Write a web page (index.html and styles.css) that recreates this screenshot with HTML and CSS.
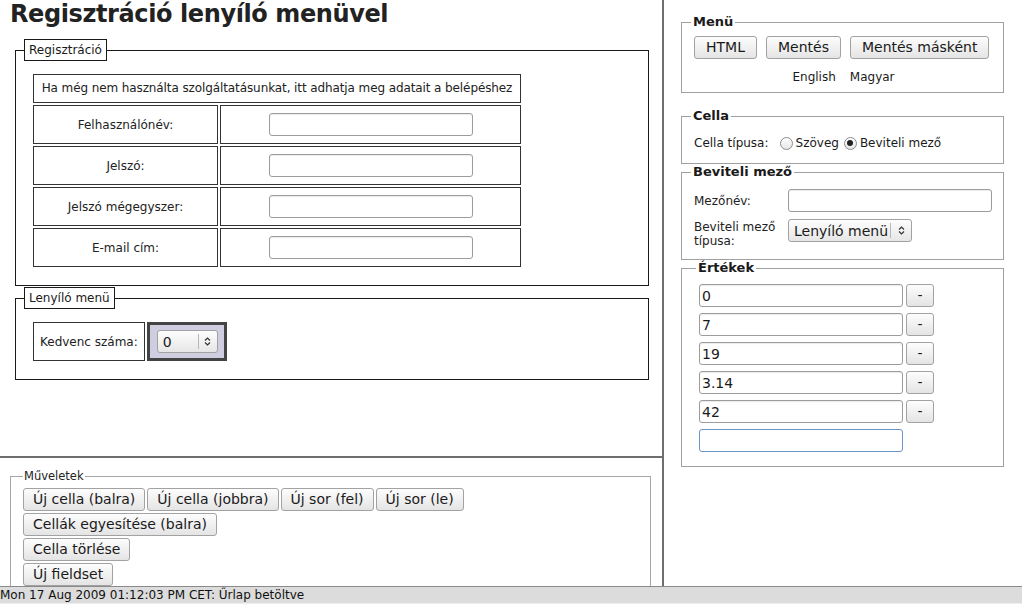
FILE: index.html
```html
<!DOCTYPE html>
<html lang="hu">
<head>
<meta charset="utf-8">
<title>Regisztráció lenyíló menüvel</title>
<link rel="stylesheet" href="styles.css">
</head>
<body>
<div class="app">
  <div class="left">
    <div class="top">
      <h1 class="title">Regisztráció lenyíló menüvel</h1>
      <fieldset class="lfs lfs-first">
        <legend class="llg">Regisztráció</legend>
        <table class="ftable ftable-reg">
          <tr><td class="intro" colspan="2">Ha még nem használta szolgáltatásunkat, itt adhatja meg adatait a belépéshez</td></tr>
          <tr><td class="lbl">Felhasználónév:</td><td class="fld"><input class="txt" type="text"></td></tr>
          <tr><td class="lbl">Jelszó:</td><td class="fld"><input class="txt" type="text"></td></tr>
          <tr><td class="lbl">Jelszó mégegyszer:</td><td class="fld"><input class="txt" type="text"></td></tr>
          <tr><td class="lbl">E-mail cím:</td><td class="fld"><input class="txt" type="text"></td></tr>
        </table>
      </fieldset>
      <fieldset class="lfs lfs-second">
        <legend class="llg">Lenyíló menü</legend>
        <table class="ftable">
          <tr>
            <td class="klbl">Kedvenc száma:</td>
            <td class="ksel">
              <div class="sel sel-num"><span class="sel-text">0</span><span class="sel-sep"></span><span class="sel-arrow"><svg width="7" height="11" viewBox="0 0 7 11"><path d="M1 4.5 L3.5 2 L6 4.5 M1 6.5 L3.5 9 L6 6.5" fill="none" stroke="#333" stroke-width="1.2"/></svg></span></div>
            </td>
          </tr>
        </table>
      </fieldset>
    </div>
    <div class="hdiv"></div>
    <div class="bottom">
      <fieldset class="ops">
        <legend class="opslg">Műveletek</legend>
        <div class="oprows">
          <div class="oprow"><button class="btn">Új cella (balra)</button><button class="btn">Új cella (jobbra)</button><button class="btn">Új sor (fel)</button><button class="btn">Új sor (le)</button></div>
          <div class="oprow"><button class="btn">Cellák egyesítése (balra)</button></div>
          <div class="oprow"><button class="btn">Cella törlése</button></div>
          <div class="oprow"><button class="btn">Új fieldset</button></div>
        </div>
      </fieldset>
    </div>
  </div>
  <div class="vdiv"></div>
  <div class="right">
    <fieldset class="rfs rfs-menu">
      <legend class="rlg">Menü</legend>
      <div class="menubtns"><button class="btn btn-menu">HTML</button><button class="btn btn-menu">Mentés</button><button class="btn btn-menu">Mentés másként</button></div>
      <div class="langs"><span class="lang">English</span><span class="lang">Magyar</span></div>
    </fieldset>
    <fieldset class="rfs rfs-cell">
      <legend class="rlg">Cella</legend>
      <div class="radiorow">
        <span class="rlabel">Cella típusa:</span>
        <span class="radio"></span><span class="ropt">Szöveg</span>
        <span class="radio checked"></span><span class="ropt">Beviteli mező</span>
      </div>
    </fieldset>
    <fieldset class="rfs rfs-input">
      <legend class="rlg">Beviteli mező</legend>
      <div class="fgrid">
        <span class="flabel flabel-mid">Mezőnév:</span>
        <input class="txt" type="text">
        <span class="flabel">Beviteli mező típusa:</span>
        <div class="sel sel-type"><span class="sel-text">Lenyíló menü</span><span class="sel-sep"></span><span class="sel-arrow"><svg width="7" height="11" viewBox="0 0 7 11"><path d="M1 4.5 L3.5 2 L6 4.5 M1 6.5 L3.5 9 L6 6.5" fill="none" stroke="#333" stroke-width="1.2"/></svg></span></div>
      </div>
    </fieldset>
    <fieldset class="rfs rfs-values">
      <legend class="rlg">Értékek</legend>
      <div class="vals">
        <div class="valrow"><input class="txt" type="text" value="0"><button class="btn btn-minus">-</button></div>
        <div class="valrow"><input class="txt" type="text" value="7"><button class="btn btn-minus">-</button></div>
        <div class="valrow"><input class="txt" type="text" value="19"><button class="btn btn-minus">-</button></div>
        <div class="valrow"><input class="txt" type="text" value="3.14"><button class="btn btn-minus">-</button></div>
        <div class="valrow"><input class="txt" type="text" value="42"><button class="btn btn-minus">-</button></div>
        <div class="valrow"><input class="txt txt-focus" type="text"></div>
      </div>
    </fieldset>
  </div>
  <div class="status">Mon 17 Aug 2009 01:12:03 PM CET: Űrlap betöltve</div>
</div>
</body>
</html>
```

FILE: styles.css
```css
* { box-sizing: border-box; }
html, body { margin: 0; padding: 0; }
body {
  font-family: "DejaVu Sans", sans-serif;
  font-size: 12px;
  color: #1a1a1a;
  background: #fff;
  width: 1022px;
  height: 604px;
  overflow: hidden;
}
.app {
  display: grid;
  grid-template-columns: 662px 2px 358px;
  grid-template-rows: 586px 18px;
  height: 604px;
}
.left { display: flex; flex-direction: column; overflow: hidden; }
.top { height: 456px; flex: none; overflow: hidden; }
.hdiv { height: 2px; background: #6e6e6e; flex: none; }
.bottom { flex: 1; overflow: hidden; }
.vdiv { background: #6e6e6e; }
.right { overflow: hidden; }
.status {
  grid-column: 1 / -1;
  background: #dcdcdc;
  border-top: 1px solid #8a8a8a;
  border-bottom: 1px solid #eeeeee;
  font-size: 12px;
  line-height: 16px;
  white-space: nowrap;
  color: #111;
}

.title {
  margin: 0;
  padding-left: 10px;
  font-size: 24px;
  line-height: 28px;
  font-weight: bold;
  letter-spacing: -0.4px;
  color: #222;
}

/* left fieldsets */
.lfs {
  width: 634px;
  margin: 0 0 0 15px;
  border: 1px solid #1a1a1a;
  padding: 11px 8px 16px;
  min-inline-size: 0;
}
.lfs-first { margin-top: 11px; }
.lfs-second { margin-top: 1px; }
.llg {
  border: 1px solid #1a1a1a;
  padding: 0 4px;
  font-size: 12px;
  line-height: 20px;
  background: #fff;
}
.ftable {
  border-collapse: separate;
  border-spacing: 2px;
  margin-left: 7px;
}
.ftable-reg { width: 492px; }
.ftable td {
  border: 1px solid #333;
  font-size: 12px;
  color: #222;
  vertical-align: middle;
}
.ftable td.intro {
  padding: 5px 2px;
  line-height: 17px;
  text-align: center;
  white-space: nowrap;
  letter-spacing: -0.1px;
}
.lbl {
  width: 185px;
  height: 39px;
  padding: 0;
  text-align: center;
}
.fld {
  width: 301px;
  height: 39px;
  padding: 0;
  text-align: center;
}
.fld .txt { vertical-align: middle; }
.ftable td.klbl { padding: 0 6px; }
.ftable td.ksel {
  border: 3px solid #444;
  background: #cfcee0;
  padding: 5px 6px 5px 7px;
}

/* form controls */
.txt {
  width: 204px;
  height: 23px;
  border: 1px solid #9c9c9c;
  border-radius: 3px;
  padding: 0 2px;
  font-family: "DejaVu Sans", sans-serif;
  font-size: 14px;
  color: #1a1a1a;
  background: #fff;
  box-shadow: inset 0 1px 1px rgba(0,0,0,0.08);
  outline: none;
  margin: 0;
}
.txt-focus { border-color: #6a93c9; box-shadow: none; }
.btn {
  height: 23px;
  padding: 0 9px;
  margin: 0;
  border: 1px solid #a2a2a2;
  border-radius: 3px;
  background: linear-gradient(#fdfdfd, #e4e4e4);
  font-family: "DejaVu Sans", sans-serif;
  font-size: 14px;
  line-height: 21px;
  color: #1a1a1a;
  white-space: nowrap;
}
.sel {
  display: flex;
  align-items: center;
  height: 23px;
  border: 1px solid #a2a2a2;
  border-radius: 3px;
  background: linear-gradient(#fdfdfd, #e6e6e6);
  font-size: 14px;
  padding-left: 5px;
  color: #1a1a1a;
}
.sel-text { flex: 1; white-space: nowrap; overflow: hidden; }
.sel-sep { width: 1px; align-self: stretch; margin: 3px 0; background: #b8b8b8; }
.sel-arrow { display: flex; justify-content: center; align-items: center; }
.sel-num { width: 61px; }
.sel-num .sel-arrow { width: 18px; }
.sel-type { width: 124px; }
.sel-type .sel-arrow { width: 20px; }

/* bottom operations */
.ops {
  width: 641px;
  margin: 11px 0 0 10px;
  border: 1px solid #a6a6a6;
  padding: 5px 12px 10px;
  min-inline-size: 0;
}
.opslg {
  padding: 0 1px;
  font-size: 11.5px;
  line-height: 14px;
  color: #222;
}
.oprows { display: flex; flex-direction: column; gap: 2px; }
.oprow { display: flex; gap: 2px; }

/* right pane */
.rfs {
  width: 323px;
  margin: 0 0 0 17px;
  border: 1px solid #a0a0a0;
  min-inline-size: 0;
}
.rlg {
  font-size: 13px;
  font-weight: bold;
  line-height: 16px;
  padding: 0 2px;
  margin-left: -3px;
  color: #1a1a1a;
}
.rfs-menu { margin-top: 14px; padding: 6px 10px 7px 12px; }
.menubtns { display: flex; gap: 9px; }
.btn-menu { padding: 0 11px; }
.langs {
  display: flex;
  justify-content: center;
  gap: 14px;
  margin-top: 10px;
  line-height: 16px;
  font-size: 12px;
}
.rfs-cell { margin-top: 15px; padding: 11px 12px 12px; }
.radiorow { display: flex; align-items: center; line-height: 16px; font-size: 12px; }
.rlabel { margin-right: 11px; }
.radio {
  width: 13px;
  height: 13px;
  border: 1px solid #8c8c8c;
  border-radius: 50%;
  background: linear-gradient(#ffffff, #e6e6e6);
  margin-right: 3px;
  display: flex;
  align-items: center;
  justify-content: center;
}
.radio.checked::after {
  content: "";
  width: 6px;
  height: 6px;
  border-radius: 50%;
  background: #222;
}
.ropt { margin-right: 5px; }
.rfs-input { padding: 9px 10px 11px 12px; }
.fgrid {
  display: grid;
  grid-template-columns: 94px 204px;
  row-gap: 7px;
  align-items: start;
}
.flabel { font-size: 12px; line-height: 14px; color: #222; padding-top: 1px; }
.flabel-mid { align-self: center; padding-top: 0; }
.rfs-values { padding: 8px 10px 14px 17px; }
.vals { display: flex; flex-direction: column; gap: 6px; }
.valrow { display: flex; gap: 3px; }
.btn-minus { width: 28px; padding: 0; }
.lang { color: #1a1a1a; }
```
